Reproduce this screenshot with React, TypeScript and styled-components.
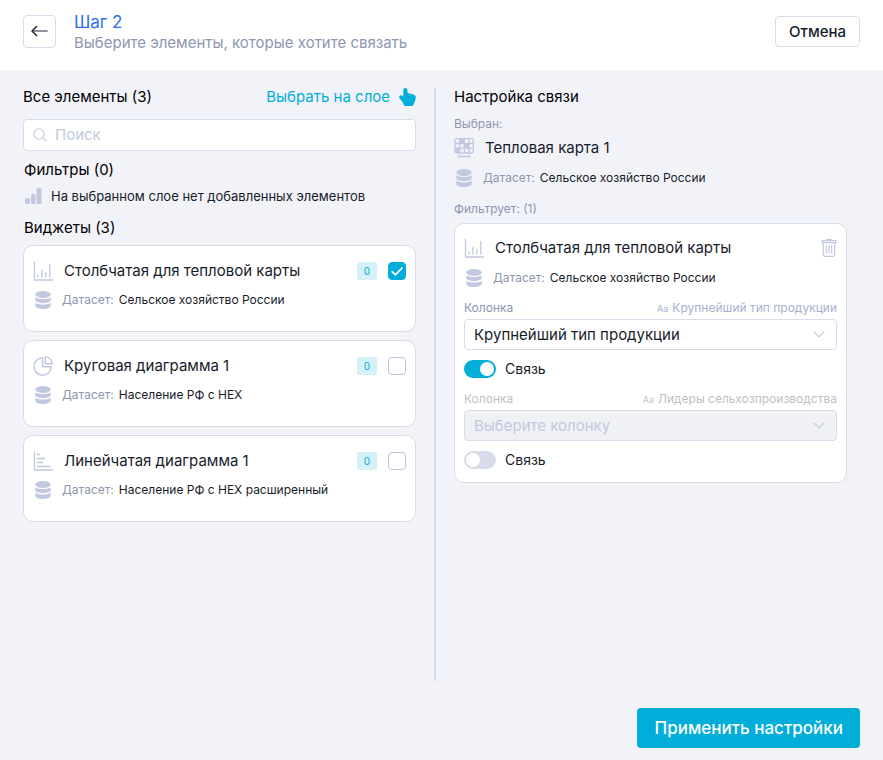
import React, { useState } from 'react';
import styled, { createGlobalStyle } from 'styled-components';

const color = {
  accent: '#00aed9',
  accentSoft: '#d4f1f7',
  blue: '#2970ee',
  border: '#d8dcea',
  icon: '#c2c8e0',
  muted: '#8e96ae',
  faint: '#a9b0cd',
  disabled: '#bfc0c6',
  text: '#181c2a',
  page: '#f2f3f9',
};

const GlobalStyle = createGlobalStyle`
  *, *::before, *::after { box-sizing: border-box; }
  body {
    margin: 0;
    background: ${color.page};
    color: ${color.text};
    font: 400 15px/18px Inter, sans-serif;
  }
  button, input, select { font: inherit; color: inherit; }
  h1, h2, h3, p, ul { margin: 0; padding: 0; font: inherit; }
  svg { display: block; flex: none; }
`;

const Page = styled.div`
  display: flex;
  flex-direction: column;
  min-height: 100vh;
`;

const Header = styled.header`
  display: flex;
  align-items: flex-start;
  min-height: 70px;
  padding: 12px 23px 0;
  background: #fff;
`;

const BackButton = styled.button`
  display: grid;
  place-items: center;
  width: 33px;
  height: 33px;
  margin: 3px 18px 0 0;
  padding: 0;
  border: 1px solid ${color.border};
  border-radius: 4px;
  background: #fff;
  cursor: pointer;
`;

const Heading = styled.div`
  flex: 1;
`;

const StepTitle = styled.h1`
  color: ${color.blue};
  font-size: 17px;
  line-height: 21px;
`;

const StepHint = styled.p`
  line-height: 20px;
  color: ${color.muted};
`;

const CancelButton = styled.button`
  height: 31px;
  margin-top: 4px;
  padding: 0 13px;
  border: 1px solid ${color.border};
  border-radius: 4px;
  background: #fff;
  font-weight: 500;
  cursor: pointer;
`;

const Columns = styled.main`
  display: grid;
  flex: 1;
  grid-template-columns: minmax(0, 1fr) 2px minmax(0, 1fr);
  gap: 18px;
  padding: 18px 36px 0 23px;
`;

const Divider = styled.div`
  background: ${color.border};
`;

const Panel = styled.section`
  min-width: 0;
`;

const PanelHead = styled.div`
  display: flex;
  align-items: center;
  justify-content: space-between;
  height: 18px;
  color: #000;
`;

const LayerButton = styled.button`
  display: flex;
  align-items: center;
  gap: 9px;
  padding: 0;
  border: 0;
  background: none;
  color: ${color.accent};
  cursor: pointer;
`;

const SearchBox = styled.label`
  display: flex;
  align-items: center;
  gap: 8px;
  height: 32px;
  margin-top: 13px;
  padding: 0 9px;
  border: 1px solid ${color.border};
  border-radius: 4px;
  background: #fff;
`;

const SearchInput = styled.input`
  flex: 1;
  min-width: 0;
  padding: 0;
  border: 0;
  outline: 0;
  background: none;
  &::placeholder { color: ${color.icon}; opacity: 1; }
`;

const GroupTitle = styled.h3`
  margin: 10px 0 8px 1px;
  color: #000;
`;

const EmptyNote = styled.p`
  display: flex;
  align-items: center;
  gap: 9px;
  height: 18px;
  margin-left: 2px;
  font-size: 13px;
  margin-bottom: 14px;
`;

const CardList = styled.ul`
  display: grid;
  gap: 8px;
  list-style: none;
`;

const Card = styled.li`
  min-height: 87px;
  padding: 15px 9px;
  border: 1px solid ${color.border};
  border-radius: 10px;
  background: #fff;
`;

const TitleRow = styled.div`
  display: flex;
  align-items: center;
  gap: 11px;
  height: 20px;
`;

const ItemTitle = styled.span`
  flex: 1;
  min-width: 0;
`;

const DatasetRow = styled.p<{ $top: number }>`
  display: flex;
  align-items: center;
  gap: 5px;
  height: 20px;
  margin-top: ${p => p.$top}px;
  font-size: 12px;
  color: ${color.text};
  & > svg { margin-right: 4px; }
`;

const Muted = styled.span`
  color: ${color.muted};
`;

const Badge = styled.span`
  width: 20px;
  height: 18px;
  border-radius: 2px;
  background: ${color.accentSoft};
  color: ${color.accent};
  font-size: 10px;
  text-align: center;
`;

const CheckWrap = styled.span`
  display: grid;
  place-items: center;
  & > * { grid-area: 1 / 1; }
  & > svg { pointer-events: none; }
`;

const CheckInput = styled.input`
  appearance: none;
  width: 18px;
  height: 18px;
  margin: 0;
  border: 1px solid #bcc2de;
  border-radius: 4px;
  background: #fff;
  cursor: pointer;
  &:checked { border-color: ${color.accent}; background: ${color.accent}; }
`;

const Caption = styled.p<{ $top: number }>`
  margin-top: ${p => p.$top}px;
  font-size: 12px;
  line-height: 16px;
  color: ${color.muted};
`;

const SelectedItem = styled.div`
  margin-top: 6px;
`;

const LinkCard = styled.div`
  margin-top: 6px;
  padding: 14px 9px 13px;
  border: 1px solid ${color.border};
  border-radius: 10px;
  background: #fff;
`;

const IconButton = styled.button`
  padding: 0;
  border: 0;
  background: none;
  cursor: pointer;
`;

const FieldHead = styled.div<{ $disabled?: boolean; $top: number }>`
  display: flex;
  justify-content: space-between;
  margin: ${p => p.$top}px 0 3px;
  font-size: 12px;
  line-height: 16px;
  color: ${p => (p.$disabled ? color.disabled : color.muted)};
`;

const ColumnType = styled.span<{ $disabled?: boolean }>`
  color: ${p => (p.$disabled ? color.disabled : color.faint)};
  & > small { margin-right: 4px; font-size: 9px; line-height: 9px; }
`;

const SelectWrap = styled.div`
  display: grid;
  align-items: center;
  & > * { grid-area: 1 / 1; }
  & > svg { justify-self: end; margin-right: 12px; pointer-events: none; }
`;

const Select = styled.select`
  appearance: none;
  width: 100%;
  height: 31px;
  padding: 0 32px 0 9px;
  border: 1px solid ${color.border};
  border-radius: 4px;
  background: #fff;
  &:disabled { background: #f0f1f5; color: ${color.icon}; opacity: 1; }
`;

const SwitchRow = styled.label`
  display: flex;
  align-items: center;
  gap: 9px;
  width: max-content;
  margin-top: 10px;
  font-size: 14px;
  cursor: pointer;
`;

const SwitchInput = styled.input`
  appearance: none;
  display: flex;
  align-items: center;
  width: 32px;
  height: 18px;
  margin: 0;
  padding: 0 2px;
  border-radius: 9px;
  background: ${color.border};
  &::before {
    content: '';
    width: 14px;
    height: 14px;
    border-radius: 50%;
    background: #fff;
  }
  &:checked { justify-content: flex-end; background: ${color.accent}; }
`;

const Footer = styled.footer`
  display: flex;
  justify-content: flex-end;
  padding: 27px 23px 12px;
`;

const ApplyButton = styled.button`
  height: 40px;
  padding: 0 17px;
  border: 0;
  border-radius: 4px;
  background: ${color.accent};
  color: #fff;
  font-size: 17px;
  font-weight: 500;
  cursor: pointer;
`;

const BackIcon = () => (
  <svg width="17" height="13" viewBox="0 0 17 13" fill="none" strokeLinecap="round" strokeLinejoin="round">
    <path d="M2 6h14" stroke="#6c6f7a" strokeWidth="1.6" />
    <path d="M5.500 1.500 1 6l4.500 4.500" stroke="#23262f" strokeWidth="1.500" />
  </svg>
);

const HandIcon = () => (
  <svg width="17" height="18" viewBox="0 0 17 18" fill={color.accent}>
    <path d="M4.300 2.100C4.300.9 5.200 0 6.400 0s2.100.9 2.100 2.100v3l5.800 1.300c1.600.4 2.600 1.500 2.500 3-.1 1.800-.7 3.400-1.400 4.900-.4.900-.6 1.500-.9 2.300-.3.900-.8 1.400-1.700 1.400H6.600c-.9 0-1.500-.4-1.800-1.200-.4-1.300-.9-2.100-1.700-3.200L.7 10.400C-.2 9 .2 7.500 1.600 7.300c.9-.1 1.700.3 2.700 1.100z" />
  </svg>
);

const SearchIcon = () => (
  <svg width="14" height="14" viewBox="0 0 14 14" fill="none" stroke={color.icon} strokeWidth="1.100" strokeLinecap="round">
    <circle cx="6" cy="6" r="5.200" />
    <path d="m9.800 9.800 3.400 3.400" />
  </svg>
);

const BarsIcon = () => (
  <svg width="17" height="16" viewBox="0 0 17 16" fill={color.icon}>
    <rect y="10" width="5" height="6" rx="1.500" />
    <rect x="6" y="6" width="4.500" height="10" rx="1.500" />
    <rect x="11.500" width="5" height="16" rx="1.500" />
  </svg>
);

const ColumnChartIcon = () => (
  <svg width="20" height="20" viewBox="0 0 20 20" fill="none" stroke={color.icon} strokeWidth="1.300" strokeLinecap="round">
    <path d="M1.500.8v18.200h18" />
    <path d="M4.800 14v2M8.800 9.500V16M12.800 11.500V16M16.800 3.500V16" />
  </svg>
);

const PieChartIcon = () => (
  <svg width="20" height="20" viewBox="0 0 20 20" fill="none" stroke={color.icon} strokeWidth="1.500" strokeLinejoin="round">
    <path d="M9.500 1.800a8.700 8.700 0 1 0 8.900 8.900H9.500z" />
    <path d="M12.200.8a7.200 7.200 0 0 1 7 7h-7z" />
  </svg>
);

const LineBarIcon = () => (
  <svg width="20" height="20" viewBox="0 0 20 20" fill="none" stroke={color.icon} strokeWidth="1.300" strokeLinecap="round">
    <path d="M1.500.8v18.200h18" />
    <path d="M4.500 3.500h2M4.500 7.500h7M4.500 11.500h5M4.500 15.500h12.300" />
  </svg>
);

const HeatMapIcon = () => (
  <svg width="20" height="20" viewBox="0 0 20 20" fill="none" stroke={color.icon} strokeWidth="1.300">
    <path d="M6 1h4v4H6zM10 5h5v5h-5zM1 10h4v5H1z" fill={color.icon} stroke="none" />
    <rect x="1" y=".7" width="18.300" height="14.300" rx="2" />
    <path d="M1 5.500h18.300M1 10.200h18.300M5.800.7V15M10.300.7V15M14.900.7V15" />
    <path d="M5 18.500h10.500M5 17v3M15.500 17v3" />
  </svg>
);

const DatabaseIcon = () => (
  <svg width="20" height="18" viewBox="0 0 20 18" fill={color.icon}>
    <ellipse cx="10" cy="3.500" rx="7.700" ry="3.500" />
    <path d="M2.300 6.200C4 8.600 16 8.600 17.700 6.200v2.900c0 1.700-3.400 3.100-7.700 3.100S2.300 10.800 2.300 9.100z" />
    <path d="M2.300 11.700C4 14.100 16 14.100 17.700 11.700v3.100c0 1.800-3.400 3.200-7.700 3.200s-7.700-1.400-7.700-3.200z" />
  </svg>
);

const TrashIcon = () => (
  <svg width="16" height="18" viewBox="0 0 16 18" fill="none" stroke={color.icon} strokeWidth="1.200" strokeLinejoin="round">
    <path d="M5.500 1.500V.6h5v.9" />
    <rect x=".9" y="1.700" width="14.200" height="2" rx=".5" />
    <path d="M2.300 4v11.600c0 1 .7 1.700 1.600 1.700h8.200c.9 0 1.600-.7 1.600-1.700V4M5.300 6.500v8M8 6.500v8M10.700 6.500v8" />
  </svg>
);

const ChevronIcon = () => (
  <svg width="12" height="7" viewBox="0 0 12 7" fill="none" stroke={color.icon} strokeWidth="1.200" strokeLinecap="round" strokeLinejoin="round">
    <path d="m1 .8 5 5 5-5" />
  </svg>
);

const TickIcon = () => (
  <svg width="12" height="9" viewBox="0 0 12 9" fill="none" stroke="#fff" strokeWidth="1.800" strokeLinecap="round" strokeLinejoin="round">
    <path d="m1.200 4.600 3.200 3.200L10.800 1.200" />
  </svg>
);

function Dataset({ name, top }: { name: string; top: number }) {
  return (
    <DatasetRow $top={top}>
      <DatabaseIcon />
      <Muted>Датасет:</Muted>
      <span>{name}</span>
    </DatasetRow>
  );
}

const widgets = [
  { id: 'columns', title: 'Столбчатая для тепловой карты', dataset: 'Сельское хозяйство России', Icon: ColumnChartIcon },
  { id: 'pie', title: 'Круговая диаграмма 1', dataset: 'Население РФ с HEX', Icon: PieChartIcon },
  { id: 'lines', title: 'Линейчатая диаграмма 1', dataset: 'Население РФ с HEX расширенный', Icon: LineBarIcon },
];

function WidgetCard({ widget, initial }: { widget: (typeof widgets)[number]; initial: boolean }) {
  const [checked, setChecked] = useState(initial);
  return (
    <Card>
      <TitleRow>
        <widget.Icon />
        <ItemTitle as="label" htmlFor={widget.id}>{widget.title}</ItemTitle>
        <Badge>0</Badge>
        <CheckWrap>
          <CheckInput id={widget.id} type="checkbox" checked={checked} onChange={e => setChecked(e.target.checked)} />
          {checked && <TickIcon />}
        </CheckWrap>
      </TitleRow>
      <Dataset name={widget.dataset} top={9} />
    </Card>
  );
}

interface FieldProps {
  id: string;
  columnType: string;
  value: string;
  disabled?: boolean;
  top: number;
}

function ColumnField({ id, columnType, value, disabled, top }: FieldProps) {
  return (
    <>
      <FieldHead $disabled={disabled} $top={top}>
        <label htmlFor={id}>Колонка</label>
        <ColumnType $disabled={disabled}><small>Aa</small>{columnType}</ColumnType>
      </FieldHead>
      <SelectWrap>
        <Select id={id} disabled={disabled}>
          <option>{value}</option>
        </Select>
        <ChevronIcon />
      </SelectWrap>
      <SwitchRow>
        <SwitchInput type="checkbox" role="switch" defaultChecked={!disabled} />
        Связь
      </SwitchRow>
    </>
  );
}

export default function App() {
  return (
    <Page>
      <GlobalStyle />
      <Header>
        <BackButton type="button" aria-label="Назад"><BackIcon /></BackButton>
        <Heading>
          <StepTitle>Шаг 2</StepTitle>
          <StepHint>Выберите элементы, которые хотите связать</StepHint>
        </Heading>
        <CancelButton type="button">Отмена</CancelButton>
      </Header>
      <Columns>
        <Panel>
          <PanelHead>
            <h2>Все элементы (3)</h2>
            <LayerButton type="button">Выбрать на слое<HandIcon /></LayerButton>
          </PanelHead>
          <SearchBox>
            <SearchIcon />
            <SearchInput type="text" placeholder="Поиск" aria-label="Поиск" />
          </SearchBox>
          <GroupTitle>Фильтры (0)</GroupTitle>
          <EmptyNote><BarsIcon />На выбранном слое нет добавленных элементов</EmptyNote>
          <GroupTitle>Виджеты (3)</GroupTitle>
          <CardList>
            {widgets.map((w, i) => <WidgetCard key={w.id} widget={w} initial={i === 0} />)}
          </CardList>
        </Panel>
        <Divider />
        <Panel>
          <PanelHead><h2>Настройка связи</h2></PanelHead>
          <Caption $top={10}>Выбран:</Caption>
          <SelectedItem>
            <TitleRow><HeatMapIcon /><ItemTitle>Тепловая карта 1</ItemTitle></TitleRow>
            <Dataset name="Сельское хозяйство России" top={10} />
          </SelectedItem>
          <Caption $top={13}>Фильтрует: (1)</Caption>
          <LinkCard>
            <TitleRow>
              <ColumnChartIcon />
              <ItemTitle>Столбчатая для тепловой карты</ItemTitle>
              <IconButton type="button" aria-label="Удалить"><TrashIcon /></IconButton>
            </TitleRow>
            <Dataset name="Сельское хозяйство России" top={10} />
            <ColumnField id="column-1" columnType="Крупнейший тип продукции" value="Крупнейший тип продукции" top={12} />
            <ColumnField id="column-2" columnType="Лидеры сельхозпроизводства" value="Выберите колонку" disabled top={13} />
          </LinkCard>
        </Panel>
      </Columns>
      <Footer><ApplyButton type="button">Применить настройки</ApplyButton></Footer>
    </Page>
  );
}
